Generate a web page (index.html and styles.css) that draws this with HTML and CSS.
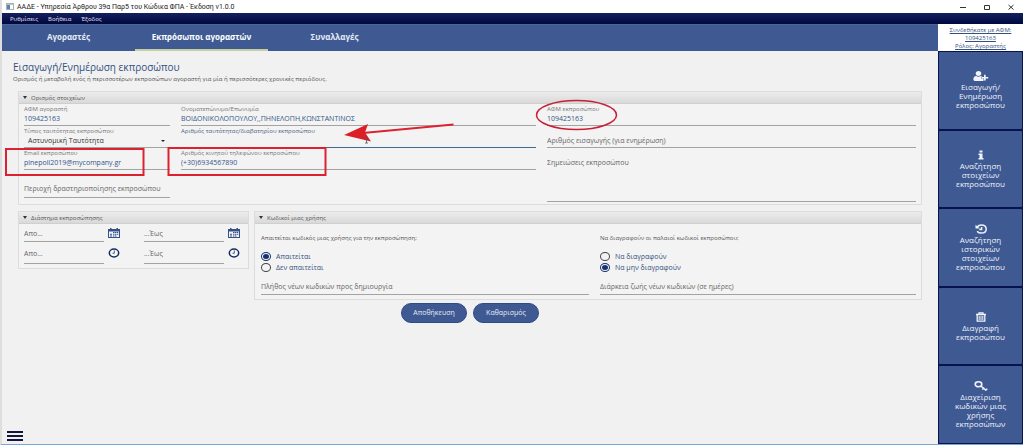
FILE: index.html
```html
<!DOCTYPE html>
<html lang="el">
<head>
<meta charset="utf-8">
<meta name="viewport" content="width=device-width, initial-scale=1">
<title>ΑΑΔΕ - Υπηρεσία Άρθρου 39α</title>
<link rel="stylesheet" href="styles.css">
</head>
<body>
<div class="window">
  <header class="titlebar">
    <svg class="app-icon" viewBox="0 0 8 7" aria-hidden="true"><rect x=".5" y=".5" width="7" height="6" fill="#fff" stroke="#b0b0b0"/><path d="M1 1.500h6" stroke="#b9c4d4"/><rect x="1" y="2" width="3" height="4" fill="#4f86b8"/></svg>
    <span class="window-title">ΑΑΔΕ - Υπηρεσία Άρθρου 39α Παρ5 του Κώδικα ΦΠΑ - Έκδοση v1.0.0</span>
    <div class="window-controls">
      <button type="button" aria-label="Ελαχιστοποίηση"><svg viewBox="0 0 6 6"><path d="M0 3.500h6"/></svg></button>
      <button type="button" aria-label="Μεγιστοποίηση"><svg viewBox="0 0 6 6"><path d="M.5 1.500h5v4h-5z"/></svg></button>
      <button type="button" aria-label="Κλείσιμο"><svg viewBox="0 0 6 6"><path d="M.5 1l5 4.500M5.500 1l-5 4.500"/></svg></button>
    </div>
  </header>
  <nav class="menubar">
    <button type="button">Ρυθμίσεις</button>
    <button type="button">Βοήθεια</button>
    <button type="button">Έξοδος</button>
  </nav>
  <div class="workspace">
    <div class="main">
      <nav class="tabs">
        <a href="#buyers">Αγοραστές</a>
        <a href="#agents" class="active">Εκπρόσωποι αγοραστών</a>
        <a href="#transactions">Συναλλαγές</a>
      </nav>
      <main class="content">
        <h1>Εισαγωγή/Ενημέρωση εκπροσώπου</h1>
        <p class="subtitle">Ορισμός ή μεταβολή ενός ή περισσοτέρων εκπροσώπων αγοραστή για μία ή περισσότερες χρονικές περιόδους.</p>
        <form class="form">
          <section class="panel">
            <h2>Ορισμός στοιχείων</h2>
            <div class="details">
              <div class="field"><label for="buyer">ΑΦΜ αγοραστή</label><input id="buyer" value="109425163"></div>
              <div class="field"><label for="name">Ονοματεπώνυμο/Επωνυμία</label><input id="name" value="ΒΟΙΔΟΝΙΚΟΛΟΠΟΥΛΟΥ,,ΠΗΝΕΛΟΠΗ,ΚΩΝΣΤΑΝΤΙΝΟΣ"></div>
              <div class="field"><label for="agent">ΑΦΜ εκπροσώπου</label><input id="agent" value="109425163"></div>
              <div class="field select-field"><label for="idtype">Τύπος ταυτότητας εκπροσώπου</label><select id="idtype"><option>Αστυνομική Ταυτότητα</option></select></div>
              <div class="field focused"><label for="idnum">Αριθμός ταυτότητας/διαβατηρίου εκπροσώπου</label><input id="idnum"></div>
              <div class="field"><input aria-label="Αριθμός εισαγωγής" placeholder="Αριθμός εισαγωγής (για ενημέρωση)"></div>
              <div class="field"><label for="email">Email εκπροσώπου</label><input id="email" value="pinepoli2019@mycompany.gr"></div>
              <div class="field"><label for="mobile">Αριθμός κινητού τηλεφώνου εκπροσώπου</label><input id="mobile" value="(+30)6934567890"></div>
              <div class="field notes"><textarea aria-label="Σημειώσεις" placeholder="Σημειώσεις εκπροσώπου"></textarea></div>
              <div class="field region"><input aria-label="Περιοχή" placeholder="Περιοχή δραστηριοποίησης εκπροσώπου"></div>
            </div>
          </section>
          <div class="lower">
            <section class="panel">
              <h2>Διάστημα εκπροσώπησης</h2>
              <div class="period">
                <div class="field"><input aria-label="Ημερομηνία από" placeholder="Απο..."></div>
                <button type="button" aria-label="Ημερολόγιο από"><svg viewBox="0 0 12 10"><use href="#cal"/></svg></button>
                <div class="field"><input aria-label="Ημερομηνία έως" placeholder="...Έως"></div>
                <button type="button" aria-label="Ημερολόγιο έως"><svg viewBox="0 0 12 10"><use href="#cal"/></svg></button>
                <div class="field"><input aria-label="Ώρα από" placeholder="Απο..."></div>
                <button type="button" aria-label="Επιλογή ώρας από"><svg viewBox="0 0 12 10"><use href="#clock"/></svg></button>
                <div class="field"><input aria-label="Ώρα έως" placeholder="...Έως"></div>
                <button type="button" aria-label="Επιλογή ώρας έως"><svg viewBox="0 0 12 10"><use href="#clock"/></svg></button>
              </div>
            </section>
            <section class="panel">
              <h2>Κωδικοί μιας χρήσης</h2>
              <div class="codes">
                <fieldset>
                  <legend>Απαιτείται κωδικός μιας χρήσης για την εκπροσώπηση;</legend>
                  <label><input type="radio" name="otp" checked>Απαιτείται</label>
                  <label><input type="radio" name="otp">Δεν απαιτείται</label>
                </fieldset>
                <fieldset>
                  <legend>Να διαγραφούν οι παλαιοί κωδικοί εκπροσώπου;</legend>
                  <label><input type="radio" name="purge">Να διαγραφούν</label>
                  <label><input type="radio" name="purge" checked>Να μην διαγραφούν</label>
                </fieldset>
                <div class="field"><input aria-label="Πλήθος κωδικών" placeholder="Πλήθος νέων κωδικών προς δημιουργία"></div>
                <div class="field"><input aria-label="Διάρκεια ζωής" placeholder="Διάρκεια ζωής νέων κωδικών (σε ημέρες)"></div>
              </div>
            </section>
          </div>
          <div class="actions">
            <button type="button">Αποθήκευση</button>
            <button type="button">Καθαρισμός</button>
          </div>
        </form>
        <button type="button" class="hamburger" aria-label="Μενού"><span></span><span></span><span></span></button>
      </main>
    </div>
    <aside class="sidebar">
      <a class="user" href="#account">Συνδεθήκατε με ΑΦΜ:<br>109425163<br>Ρόλος: Αγοραστής</a>
      <button type="button"><svg viewBox="0 0 16 10"><path fill="currentColor" d="M5.500 0c1.700 0 2.800 1.100 2.800 2.500S7.200 5 5.500 5 2.700 3.900 2.700 2.500 3.800 0 5.500 0zM3.200 5c1.200 1 3.400 1 4.600 0 .8 0 1.400.3 1.800.7H8.300v2.100h2.200v2.100H2C.9 9.900.4 9.200.4 8.200.4 6.500 1.300 5 3.200 5zM11 3.700h1.700v2.200h2.500v1.500h-2.500v2.200H11V7.400H8.700V5.900H11z"/></svg><span>Εισαγωγή/<br>Ενημέρωση<br>εκπροσώπου</span></button>
      <button type="button"><svg viewBox="0 0 16 10"><path fill="currentColor" d="M6.500.5h3v2h-3zM5.500 3.500h4v4.400h1v1.600h-5V7.900h1V5.100h-1z"/></svg><span>Αναζήτηση<br>στοιχείων<br>εκπροσώπου</span></button>
      <button type="button"><svg viewBox="0 0 16 10"><path fill="none" stroke="currentColor" stroke-width="1.500" d="M4.200 3C5.200 1.500 6.600.9 8.300.9c2.900 0 4.900 1.700 4.900 4.100s-2 4.100-4.900 4.100c-1.900 0-3.300-.7-4.200-1.900M8.600 3v2.600H6.300"/><path fill="currentColor" d="M2.500.8v3.700h4.400z"/></svg><span>Αναζήτηση<br>ιστορικών<br>στοιχείων<br>εκπροσώπου</span></button>
      <button type="button"><svg viewBox="0 0 16 10"><path fill="none" stroke="currentColor" stroke-width="1.300" d="M3 2.500h10M4.200 2.500v6.700h7.600V2.500M6 2.200V.9h4v1.300"/><path stroke="currentColor" stroke-width="1" d="M6.200 4v4M8 4v4M9.800 4v4"/></svg><span>Διαγραφή<br>εκπροσώπου</span></button>
      <button type="button"><svg viewBox="0 0 16 10"><ellipse cx="5.500" cy="3.300" rx="3.300" ry="2.500" fill="none" stroke="currentColor" stroke-width="1.600"/><path fill="none" stroke="currentColor" stroke-width="1.500" d="M7.800 5l5.400 4.300M9.300 8.500l2-1.800M14.300 7.800l-2 1.600"/></svg><span>Διαχείριση<br>κωδικών μιας<br>χρήσης<br>εκπροσώπων</span></button>
    </aside>
  </div>
  <svg class="annotations" viewBox="0 0 1023 445" aria-hidden="true">
    <g fill="none" stroke="#dc2230" stroke-width="2">
      <rect x="6" y="149" width="137.500" height="26"/>
      <rect x="168.500" y="148" width="157" height="27"/>
      <ellipse cx="576.500" cy="115" rx="40" ry="14.500" stroke="#c81f36" stroke-width="1.500"/>
      <path d="M453.500 124.500L363 133"/>
    </g>
    <path fill="#dc1f26" d="M344 135l24-11-3 8.500 6 9z"/>
    <path d="M365 137.500h3M366.500 137.500v5.500M365 143h3" stroke="#555" stroke-width=".8"/>
  </svg>
</div>
<svg class="symbols" aria-hidden="true">
  <symbol id="cal" viewBox="0 0 12 10"><path fill="#34528a" d="M0 1h2V0h1.500v1h5V0H10v1h2v9H0z"/><path fill="#f3f3f3" d="M1 3.500h10V9H1z"/><path fill="#34528a" d="M5 4h1.500v1H5zM7 4h1.500v1H7zM9 4h1.300v1H9zM2 5.700h2v1H2zM5 5.700h1.500v1H5zM7 5.700h1.500v1H7zM9 5.700h1.300v1H9zM2 7.500h2v1H2zM5 7.500h1.500v1H5zM7 7.500h1.500v1H7z"/></symbol>
  <symbol id="clock" viewBox="0 0 12 10"><ellipse cx="6" cy="5" rx="4.700" ry="3.900" fill="#f8f8f8" stroke="#162c60" stroke-width="1.500"/><path d="M6.300 2.500v2.800H4.500" fill="none" stroke="#3f5a8e"/></symbol>
</svg>
</body>
</html>
```
FILE: styles.css
```css
* { box-sizing: border-box; }

body {
  margin: 0;
  font-family: "Open Sans", "Noto Sans", sans-serif;
  font-size: 7px;
  line-height: 10px;
  color: #555;
  background: #f1f1f1;
}

button, input, select, textarea {
  font: inherit;
  color: inherit;
  margin: 0;
  padding: 0;
  border: 0;
  border-radius: 0;
  background: none;
  outline: 0;
}

button { cursor: pointer; }
h1, h2, p { margin: 0; font-weight: 400; }

.window {
  position: relative;
  display: flex;
  flex-direction: column;
  min-height: 100vh;
  border-left: 2px solid #dedede;
  border-bottom: 1px solid #7ba7d6;
}

.titlebar {
  display: flex;
  align-items: center;
  gap: 3px;
  height: 13px;
  padding-left: 4px;
  background: #fff;
  color: #222;
  font-family: Roboto, "Open Sans", sans-serif;
}

.app-icon { width: 8px; height: 7px; }
.window-title { flex: 1; }

.window-controls { display: flex; gap: 18px; padding-right: 9px; }
.window-controls button { display: flex; }
.window-controls svg { width: 6px; height: 6px; fill: none; stroke: #333; stroke-width: 1; }

.menubar {
  display: flex;
  align-items: center;
  gap: 10px;
  height: 11px;
  padding-left: 8px;
  background: linear-gradient(#14205f, #00083f);
  color: #e4e6ee;
  font-size: 6px;
}

.workspace { flex: 1; display: flex; }
.main { flex: 1; display: flex; flex-direction: column; min-width: 0; }

.tabs {
  display: flex;
  height: 27px;
  background: #3f5a93;
  border-top: 1px solid #4c6498;
}

.tabs a {
  flex: 0 1 133px;
  display: flex;
  align-items: center;
  justify-content: center;
  border-bottom: 2px solid transparent;
  color: #e6ebf5;
  font-size: 8px;
  font-weight: 700;
  text-decoration: none;
}

.tabs .active { border-color: #c6cfa4; color: #fff; }

.content { flex: 1; display: flex; flex-direction: column; padding: 8px 16px 3px 11px; }

h1 { font-size: 10px; line-height: 16px; color: #34527f; }
.subtitle { font-size: 6px; line-height: 9px; }

.form { display: flex; flex-direction: column; gap: 6px; padding: 7px 0 0 5px; }

.panel { border: 1px solid #dcdcdc; background: #f3f3f3; }

.panel h2 {
  display: flex;
  align-items: center;
  gap: 4px;
  height: 12px;
  padding-left: 4px;
  border-bottom: 1px solid #cfcfcf;
  background: linear-gradient(#ececec, #d9d9d9);
  font-size: 6px;
}

.panel h2::before {
  content: "";
  border: 2px solid transparent;
  border-top: 3px solid #333;
  border-bottom: 0;
}

.field {
  display: flex;
  flex-direction: column;
  justify-content: flex-end;
  min-width: 0;
  border-bottom: 1px solid #a3a3a3;
  padding-bottom: 1px;
}

.field label { height: 10px; font-size: 6px; white-space: nowrap; color: #777; }
.field input, .field select { width: 100%; height: 10px; color: #34568a; }
.field ::placeholder { color: #666; opacity: 1; }
.field.focused { border-color: #3f6b90; }
.field.focused label { color: #4a6388; }

.select-field { position: relative; }
.select-field select { appearance: none; padding-left: 4px; color: #333; }

.select-field::after {
  content: "";
  position: absolute;
  right: 5px;
  bottom: 5px;
  border: 2px solid transparent;
  border-top-color: #222;
  border-bottom: 0;
}

.details {
  display: grid;
  grid-template-columns: 146fr 355fr 369fr;
  grid-template-rows: 22px 22px 22px 32px;
  column-gap: 11px;
  padding: 0 5px 2px;
}

.notes { grid-column: 3; grid-row: 3 / 5; }
.notes textarea { flex: 1; padding-top: 10px; resize: none; }
.region { grid-column: 1; align-self: start; height: 28px; padding-bottom: 3px; }

.lower { display: grid; grid-template-columns: 231fr 668fr; gap: 5px; align-items: start; }

.period {
  display: grid;
  grid-template-columns: 80fr 12px 100fr 12px;
  grid-template-rows: 18px 22px;
  column-gap: 4px;
  padding: 0 8px 4px 5px;
}

.period .field { padding-bottom: 2px; }
.period .field:nth-child(4n + 3) { margin-left: 20px; }
.period .field:nth-child(n + 5) { padding-bottom: 4px; }
.period button { display: flex; align-items: center; }
.period svg { width: 12px; height: 10px; }

.codes {
  display: grid;
  grid-template-columns: 328fr 316fr;
  column-gap: 11px;
  row-gap: 8px;
  padding: 9px 5px 4px 6px;
}

.codes .field { height: 14px; padding-bottom: 2px; }

fieldset { margin: 0; padding: 0; border: 0; min-width: 0; }
legend { padding: 0 0 7px; font-size: 6px; line-height: 11px; }
fieldset label { display: flex; align-items: center; gap: 5px; height: 11px; color: #34527f; }

fieldset input {
  appearance: none;
  display: grid;
  place-items: center;
  width: 10px;
  height: 9px;
  border: 1px solid #444;
  border-radius: 50%;
}

fieldset input:checked { border-color: #16316e; }
fieldset input:checked::before { content: ""; width: 6px; height: 5px; border-radius: 50%; background: #16316e; }

.actions { display: flex; justify-content: center; gap: 6px; margin-top: -3px; }

.actions button {
  width: 66px;
  height: 20px;
  border: 1px solid #2f4c88;
  border-radius: 10px;
  background: #3f5a93;
  color: #e6ebf5;
}

.hamburger { display: flex; flex-direction: column; gap: 2px; width: 16px; margin: auto 0 0 -6px; }
.hamburger span { width: 16px; height: 2px; background: #11163f; }

.sidebar { display: flex; flex-direction: column; width: 85px; background: #0a1655; }

.user {
  height: 27px;
  padding-top: 2px;
  background: #fff;
  color: #34527f;
  font-size: 6px;
  line-height: 8px;
  text-align: center;
}

.sidebar button {
  flex: 1;
  display: flex;
  flex-direction: column;
  align-items: center;
  justify-content: center;
  gap: 1px;
  border: 1px solid #07134f;
  border-radius: 2px;
  background: #3f5a93;
  color: #f0f3f9;
  font-size: 8px;
  line-height: 9px;
}

.sidebar svg { width: 16px; height: 10px; }

.annotations { position: absolute; top: 0; left: -2px; width: 100vw; pointer-events: none; }
.symbols { display: none; }
```
